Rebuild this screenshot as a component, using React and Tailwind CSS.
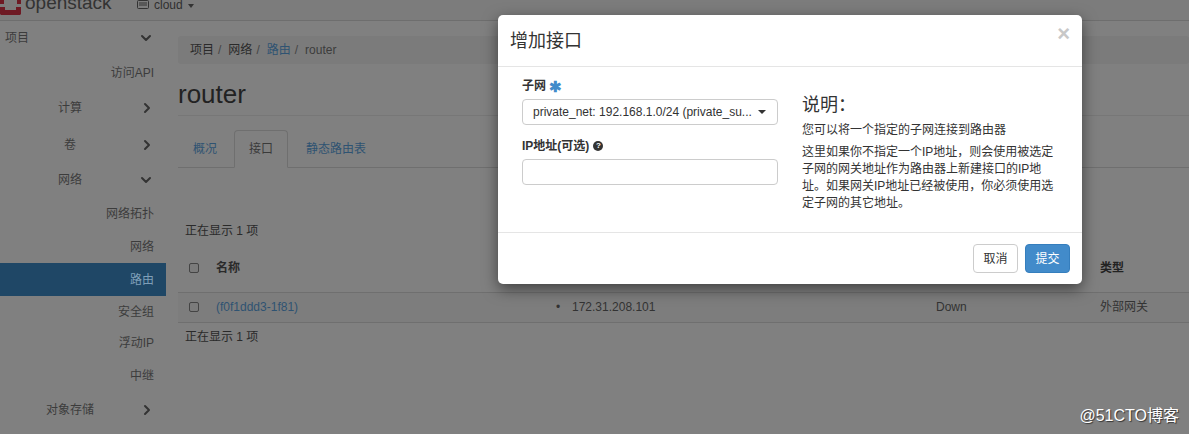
import React from 'react';
import { ChevronDown, ChevronRight } from 'lucide-react';

const cjk = '[font-family:"Liberation_Sans","Noto_Sans_CJK_SC",sans-serif]';

const sideItems = [
  { label: '项目', h: 'h-[34px]', mode: 'top', icon: 'down' },
  { label: '访问API', h: 'h-[36px]', mode: 'sub' },
  { label: '计算', h: 'h-[34px]', mode: 'group', icon: 'right' },
  { label: '卷', h: 'h-[39px]', mode: 'group', icon: 'right' },
  { label: '网络', h: 'h-[32px]', mode: 'group', icon: 'down' },
  { label: '网络拓扑', h: 'h-[35px]', mode: 'sub' },
  { label: '网络', h: 'h-[32px]', mode: 'sub' },
  { label: '路由', h: 'h-[33px]', mode: 'sub', active: true },
  { label: '安全组', h: 'h-[31px]', mode: 'sub' },
  { label: '浮动IP', h: 'h-[32px]', mode: 'sub' },
  { label: '中继', h: 'h-[33px]', mode: 'sub' },
  { label: '对象存储', h: 'h-[36px]', mode: 'group', icon: 'right' },
];

function SideRow({ item }) {
  return (
    <div className={`flex items-center ${item.h} ${item.active ? 'bg-[#1f4766] text-[#7f9fb8]' : 'text-[#3c3c3c]'}`}>
      {item.mode === 'top' && <span className="pl-[5px] flex-1">{item.label}</span>}
      {item.mode === 'group' && <span className="w-[140px] text-center">{item.label}</span>}
      {item.mode === 'sub' && <span className="w-[154px] text-right">{item.label}</span>}
      {item.icon === 'down' && <ChevronDown size={16} strokeWidth={3} className="absolute left-[138px] text-[#333]" />}
      {item.icon === 'right' && <ChevronRight size={16} strokeWidth={3} className="absolute left-[139px] text-[#333]" />}
    </div>
  );
}

function Checkbox() {
  return <span className="block w-[10px] h-[10px] border border-[#444] rounded-[2px] bg-[#7b7b7b]" />;
}

function InterfaceModal() {
  return (
    <div className="absolute left-[498px] top-[15px] w-[584px] h-[269px] bg-white rounded-[5px] shadow-[0_5px_15px_rgba(0,0,0,0.5)] text-[#333]">
      <div className="h-[52px] border-b border-[#e5e5e5] flex items-start justify-between pl-[12px] pr-[12px]">
        <h4 className="text-[18px] leading-[26px] mt-[13px]">增加接口</h4>
        <span className="text-[22px] leading-[21px] font-bold text-[#c8c8c8] mt-[8px]">×</span>
      </div>
      <div className="h-[166px] flex border-b border-[#e5e5e5]">
        <div className="w-[256px] ml-[24px] pt-[11px]">
          <label className="flex items-center h-[16px] font-bold text-[12px] gap-[3px]">
            子网
            <span className="text-[#428bca] text-[15px] leading-none">✱</span>
          </label>
          <div className="mt-[5px] h-[26px] border border-[#ccc] rounded-[4px] flex items-center pl-[10px] pr-[11px] justify-between">
            <span className="truncate">private_net: 192.168.1.0/24 (private_su...</span>
            <span className="w-0 h-0 border-x-[4px] border-x-transparent border-t-[4px] border-t-[#333] shrink-0" />
          </div>
          <label className="flex items-center h-[16px] mt-[13px] font-bold text-[12px] gap-[4px]">
            IP地址(可选)
            <span className="w-[10px] h-[10px] rounded-full bg-[#333] text-white text-[8px] leading-[10px] text-center font-bold">?</span>
          </label>
          <div className="mt-[5px] h-[26px] border border-[#ccc] rounded-[4px]" />
        </div>
        <div className="ml-[24px] w-[258px] pt-[27px]">
          <h3 className="text-[18px] leading-[22px]">说明：</h3>
          <p className="mt-[6px] leading-[17px]">您可以将一个指定的子网连接到路由器</p>
          <p className="mt-[5px] leading-[17px]">
            这里如果你不指定一个IP地址，则会使用被选定子网的网关地址作为路由器上新建接口的IP地址。如果网关IP地址已经被使用，你必须使用选定子网的其它地址。
          </p>
        </div>
      </div>
      <div className="flex justify-end gap-[7px] pt-[11px] pr-[12px]">
        <button className="w-[45px] h-[29px] border border-[#ccc] rounded-[4px] bg-white text-[#333]">取消</button>
        <button className="w-[45px] h-[29px] border border-[#357ebd] rounded-[4px] bg-[#428bca] text-white">提交</button>
      </div>
    </div>
  );
}

export default function App() {
  return (
    <div className={`relative w-[1189px] h-[434px] overflow-hidden bg-[#808080] text-[12px] text-[#2a2a2a] ${cjk}`}>
      <header className="h-[21px] bg-[#7c7c7c] border-b border-[#6e6e6e] flex items-end">
        <div className="w-[137px] h-[20px] flex items-start overflow-hidden">
          <svg width="21" height="15" viewBox="0 0 21 15" className="shrink-0">
            <path d="M0 0h4v4H0z" fill="#6e1a24" />
            <path d="M17 0h4v4h-4z" fill="#6e1a24" />
            <path d="M0 7h5v3h11V7h5v7l-1 1H1l-1-1z" fill="#6e1a24" />
          </svg>
          <span className="ml-[4px] -mt-[9px] text-[19px] leading-[24px] text-[#333]">openstack</span>
        </div>
        <div className="h-[20px] flex items-start text-[#2f2f2f] gap-[5px]">
          <svg width="12" height="10" viewBox="0 0 12 10" className="shrink-0">
            <rect x="0.5" y="0.5" width="11" height="8" rx="1" fill="none" stroke="#333" />
            <path d="M2 3h8M2 5h8" stroke="#333" />
          </svg>
          <span className="leading-[11px] text-[12px]">cloud</span>
          <span className="mt-[4px] w-0 h-0 border-x-[3.5px] border-x-transparent border-t-[4px] border-t-[#333]" />
        </div>
      </header>

      <div className="flex">
        <aside className="relative w-[166px] shrink-0">
          {sideItems.map((item, i) => (
            <SideRow key={i} item={item} />
          ))}
        </aside>

        <main className="ml-[12px] flex-1 pt-[15px]">
          <div className="h-[28px] bg-[#7b7b7b] rounded-[3px] flex items-center pl-[12px] gap-[4px]">
            <span>项目</span><span className="text-[#444]">/</span>
            <span className="ml-[3px]">网络</span><span className="text-[#444]">/</span>
            <span className="ml-[3px] text-[#2f5372]">路由</span><span className="text-[#444]">/</span>
            <span className="ml-[3px] text-[#3c3c3c]">router</span>
          </div>
          <div className="h-[52px] border-b border-[#777]">
            <h1 className="text-[26px] leading-[30px] mt-[15px] text-[#222] inline-block">router</h1>
          </div>
          <div className="mt-[14px] h-[38px] flex border-b border-[#6f6f6f]">
            <span className="pl-[15px] w-[56px] leading-[38px] text-[#2f5372]">概况</span>
            <span className="px-[14px] h-[38px] leading-[36px] border border-[#6f6f6f] border-b-[#808080] rounded-t-[4px] text-[#3a3a3a]">接口</span>
            <span className="pl-[18px] leading-[38px] text-[#2f5372]">静态路由表</span>
          </div>
          <p className="mt-[55px] ml-[7px] leading-[16px]">正在显示 1 项</p>
          <div className="mt-[9px] h-[45px] pb-[4px] border-b border-[#6f6f6f] flex items-center font-bold">
            <div className="w-[38px] pl-[11px]"><Checkbox /></div>
            <span className="w-[884px]">名称</span>
            <span className="text-[#222]">类型</span>
          </div>
          <div className="h-[30px] pb-[1px] bg-[#7d7d7d] border-b border-[#6f6f6f] flex items-center">
            <div className="w-[38px] pl-[11px]"><Checkbox /></div>
            <span className="w-[340px] text-[#2f5372]">(f0f1ddd3-1f81)</span>
            <span className="w-[16px] text-[#333]">•</span>
            <span className="w-[364px] text-[#333]">172.31.208.101</span>
            <span className="w-[164px] text-[#333]">Down</span>
            <span className="text-[#333]">外部网关</span>
          </div>
          <p className="mt-[6px] ml-[7px] leading-[16px]">正在显示 1 项</p>
        </main>
      </div>

      <InterfaceModal />
      <span className="absolute right-[10px] bottom-[9px] text-[16px] leading-[18px] text-white [text-shadow:1px_1px_1px_rgba(0,0,0,0.6)]">@51CTO博客</span>
    </div>
  );
}
